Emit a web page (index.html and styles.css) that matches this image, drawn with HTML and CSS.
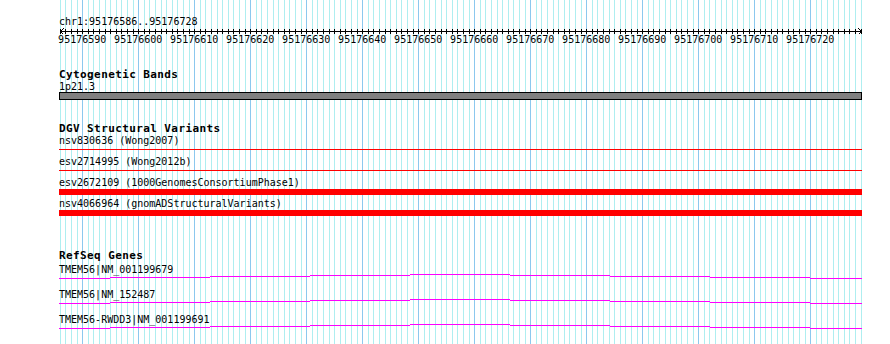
FILE: index.html
```html
<!DOCTYPE html>
<html>
<head>
    <meta charset="utf-8" />
    <title>chr1:95176586..95176728</title>
    <link rel="stylesheet" href="styles.css">
</head>
<body>
    <div class="browser">
        <svg class="grid" id="grid" width="803" height="344">
            <path class="grid-minor" id="gridMinor" d=""></path>
            <path class="grid-major" id="gridMajor" d=""></path>
        </svg>

        <div class="view">
            <div class="locus">chr1:95176586..95176728</div>

            <svg class="ruler" width="803" height="7">
                <path class="ruler-line" id="rulerLine" d=""></path>
            </svg>

            <div class="scale">
                <span class="scale-label">95176590</span>
                <span class="scale-label">95176600</span>
                <span class="scale-label">95176610</span>
                <span class="scale-label">95176620</span>
                <span class="scale-label">95176630</span>
                <span class="scale-label">95176640</span>
                <span class="scale-label">95176650</span>
                <span class="scale-label">95176660</span>
                <span class="scale-label">95176670</span>
                <span class="scale-label">95176680</span>
                <span class="scale-label">95176690</span>
                <span class="scale-label">95176700</span>
                <span class="scale-label">95176710</span>
                <span class="scale-label">95176720</span>
            </div>

            <div class="track">
                <div class="track-title">Cytogenetic Bands</div>
                <div class="feature-label">1p21.3</div>
                <div class="band"></div>
            </div>

            <div class="track">
                <div class="track-title">DGV Structural Variants</div>

                <div class="feature-label">nsv830636 (Wong2007)</div>
                <div class="feature-glyph"><div class="bar-thin"></div></div>

                <div class="feature-label">esv2714995 (Wong2012b)</div>
                <div class="feature-glyph"><div class="bar-thin"></div></div>

                <div class="feature-label">esv2672109 (1000GenomesConsortiumPhase1)</div>
                <div class="feature-glyph thick"><div class="bar-thick"></div></div>

                <div class="feature-label">nsv4066964 (gnomADStructuralVariants)</div>
                <div class="feature-glyph thick"><div class="bar-thick"></div></div>
            </div>

            <div class="track refseq">
                <div class="track-title">RefSeq Genes</div>

                <div class="genes">
                    <div class="feature-label">TMEM56|NM_001199679</div>
                    <div class="gene-glyph">
                        <div class="seg seg-first up0"></div>
                        <div class="seg up1"></div>
                        <div class="seg up2"></div>
                        <div class="seg up3"></div>
                        <div class="seg up4"></div>
                        <div class="seg up3"></div>
                        <div class="seg up2"></div>
                        <div class="seg up1"></div>
                        <div class="seg seg-last up0"></div>
                    </div>

                    <div class="feature-label">TMEM56|NM_152487</div>
                    <div class="gene-glyph">
                        <div class="seg seg-first up0"></div>
                        <div class="seg up1"></div>
                        <div class="seg up2"></div>
                        <div class="seg up3"></div>
                        <div class="seg up4"></div>
                        <div class="seg up3"></div>
                        <div class="seg up2"></div>
                        <div class="seg up1"></div>
                        <div class="seg seg-last up0"></div>
                    </div>

                    <div class="feature-label">TMEM56-RWDD3|NM_001199691</div>
                    <div class="gene-glyph">
                        <div class="seg seg-first up0"></div>
                        <div class="seg up1"></div>
                        <div class="seg up2"></div>
                        <div class="seg up3"></div>
                        <div class="seg up4"></div>
                        <div class="seg up3"></div>
                        <div class="seg up2"></div>
                        <div class="seg up1"></div>
                        <div class="seg seg-last up0"></div>
                    </div>
                </div>
            </div>
        </div>
    </div>

    <script src="script.js"></script>
</body>
</html>
```

FILE: styles.css
```css
* {
    padding: 0;
    margin: 0;
    box-sizing: border-box;
}

body {
    width: 890px;
    height: 344px;
    overflow: hidden;
    background: #fff;
    color: #000;
    font-family: "DejaVu Sans Mono", monospace;
    font-size: 10px;
}

.browser {
    position: relative;
    height: 344px;
}

.grid {
    position: absolute;
    top: 0;
    left: 59px;
    shape-rendering: crispEdges;
}

.grid-minor {
    stroke: #aeeef0;
    stroke-width: 1;
}

.grid-major {
    stroke: #8cc8ee;
    stroke-width: 1;
}

.view {
    position: relative;
    width: 803px;
    margin-left: 59px;
    padding-top: 16px;
}

.locus {
    line-height: 12px;
}

.ruler {
    display: block;
    shape-rendering: crispEdges;
}

.ruler-line {
    fill: none;
    stroke: #000;
    stroke-width: 1;
}

.scale {
    display: flex;
    margin-left: -4.8px;
    margin-top: -1px;
    line-height: 12px;
    white-space: nowrap;
}

.scale-label {
    flex: 0 0 56px;
    text-align: center;
}

.track {
    margin-top: 22px;
}

.track-title {
    font-size: 11px;
    font-weight: bold;
    letter-spacing: 0.4px;
    line-height: 13px;
}

.feature-label {
    line-height: 11px;
    white-space: nowrap;
}

.band {
    height: 8px;
    border: 1px solid #000;
    background: #808080;
}

.feature-glyph {
    height: 7px;
    padding-top: 3px;
    margin-bottom: 3px;
}

.feature-glyph.thick {
    padding-top: 1px;
}

.bar-thin {
    height: 1px;
    background: #f00;
}

.bar-thick {
    height: 6px;
    background: #f00;
}

.refseq {
    margin-top: 33px;
}

.genes {
    padding-top: 2px;
}

.gene-glyph {
    display: flex;
    align-items: flex-start;
    height: 16px;
    margin-top: -2px;
}

.seg {
    flex: 0 0 100px;
    height: 1px;
    background: #f0f;
}

.seg-first {
    flex-basis: 51px;
}

.seg-last {
    flex: 1;
}

.up0 { margin-top: 5px; }
.up1 { margin-top: 4px; }
.up2 { margin-top: 3px; }
.up3 { margin-top: 2px; }
.up4 { margin-top: 1px; }
```

FILE: script.js
```js
// one grid line per base, a darker one every 10 bases
var viewLeft = 59;
var firstLine = 59.8;
var bpWidth = 5.6;
var bpCount = 143;
var majorOffset = 4; // 95176590 is 4 bases after 95176586

function lineX(k) {
    return Math.round(firstLine + k * bpWidth) - viewLeft + 0.5;
}

function drawGrid() {
    var minor = "";
    var major = "";
    for (var k = 0; k <= bpCount; k++) {
        var seg = "M" + lineX(k) + " 0V344";
        if ((k - majorOffset) % 10 === 0) {
            major += seg;
        } else {
            minor += seg;
        }
    }
    document.getElementById("gridMinor").setAttribute("d", minor);
    document.getElementById("gridMajor").setAttribute("d", major);
}

function drawRuler() {
    var right = lineX(bpCount);
    var d = "M1 3.5H" + right;
    d += "M4.5 0.5L1.5 3.5L4.5 6.5";
    d += "M" + (right - 3) + " 0.5L" + right + " 3.5L" + (right - 3) + " 6.5";
    for (var k = 0; k <= bpCount; k++) {
        d += "M" + lineX(k) + " 1V6";
    }
    document.getElementById("rulerLine").setAttribute("d", d);
}

drawGrid();
drawRuler();
```
